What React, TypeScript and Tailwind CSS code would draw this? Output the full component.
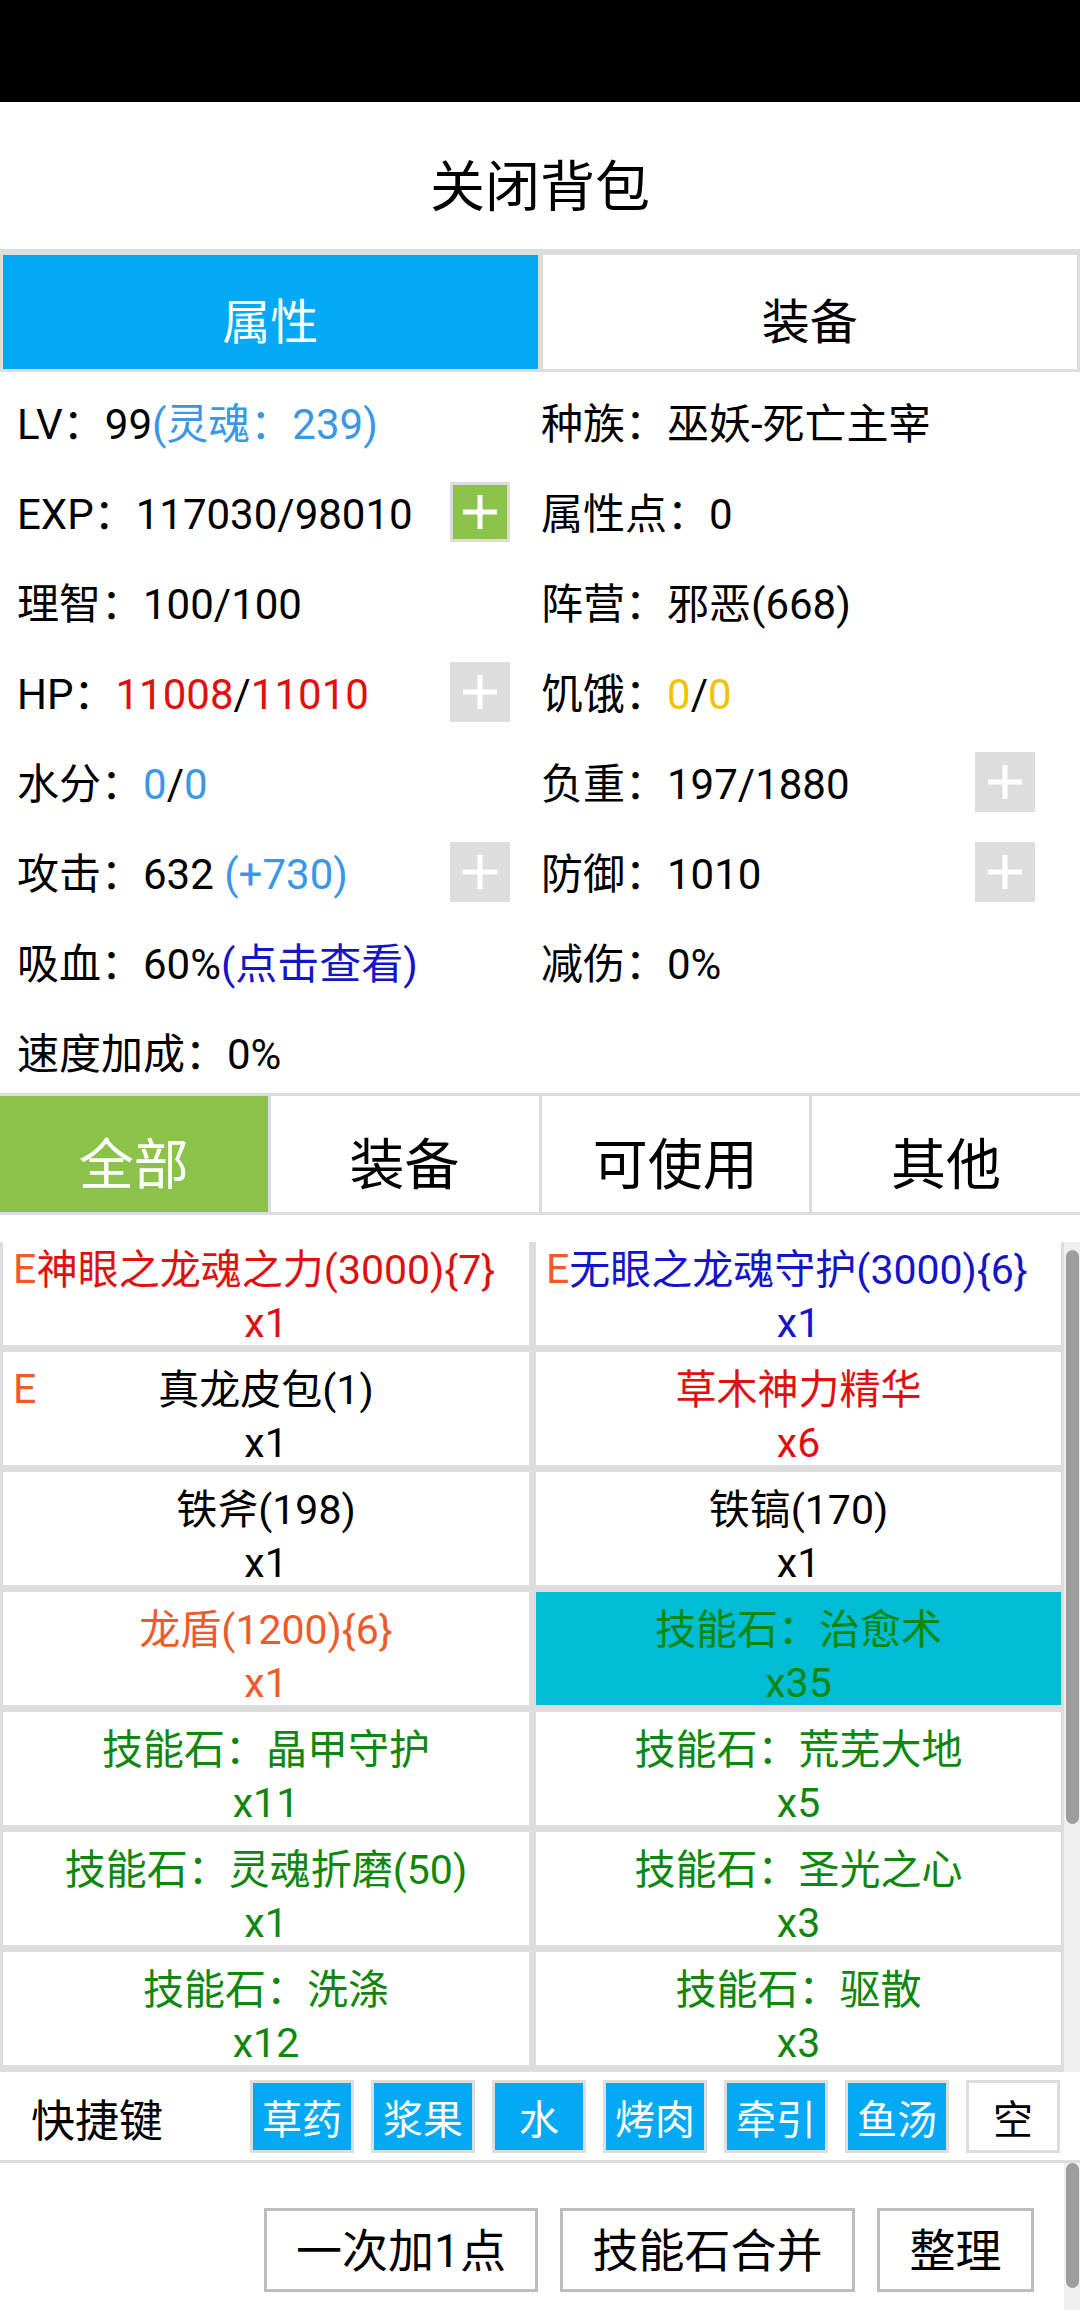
import React from "react";

const RED = "text-[#e01010]";
const LBLUE = "text-[#3a96e6]";
const DBLUE = "text-[#1414c8]";
const YEL = "text-[#f2c200]";
const GREEN = "text-[#0f870f]";
const ORANGE = "text-[#ef5a2a]";

function Plus({ green }: { green?: boolean }) {
  return (
    <div
      className={
        green
          ? "w-[60px] h-[60px] border-[3px] border-[#dcdcdc] bg-[#8bc34a] flex items-center justify-center"
          : "w-[60px] h-[60px] bg-[#dddddd] flex items-center justify-center"
      }
    >
      <svg width="36" height="36" viewBox="0 0 36 36">
        <rect x="15.5" y="1" width="5" height="34" fill="#ffffff" />
        <rect x="1" y="15.5" width="34" height="5" fill="#ffffff" />
      </svg>
    </div>
  );
}

function Row({
  left,
  right,
  lp,
  rp,
}: {
  left: React.ReactNode;
  right?: React.ReactNode;
  lp?: "green" | "gray";
  rp?: boolean;
}) {
  return (
    <div className="h-[90px] flex items-center">
      <div className="w-[541px] flex items-center">
        <div className="flex-1 pl-[17px] pt-[4px] whitespace-nowrap">{left}</div>
        <div className="w-[60px] h-[60px] mr-[31px]">
          {lp ? <Plus green={lp === "green"} /> : null}
        </div>
      </div>
      <div className="flex-1 flex items-center">
        <div className="flex-1 pt-[4px] whitespace-nowrap">{right}</div>
        <div className="w-[60px] h-[60px] mr-[45px]">{rp ? <Plus /> : null}</div>
      </div>
    </div>
  );
}

type Item = {
  name: string;
  count: string;
  color: string;
  e?: boolean;
  bg?: string;
};

const items: Item[] = [
  { name: "神眼之龙魂之力(3000){7}", count: "x1", color: RED, e: true },
  { name: "无眼之龙魂守护(3000){6}", count: "x1", color: DBLUE, e: true },
  { name: "真龙皮包(1)", count: "x1", color: "text-black", e: true },
  { name: "草木神力精华", count: "x6", color: RED },
  { name: "铁斧(198)", count: "x1", color: "text-black" },
  { name: "铁镐(170)", count: "x1", color: "text-black" },
  { name: "龙盾(1200){6}", count: "x1", color: ORANGE },
  { name: "技能石：治愈术", count: "x35", color: GREEN, bg: "bg-[#00bcd4]" },
  { name: "技能石：晶甲守护", count: "x11", color: GREEN },
  { name: "技能石：荒芜大地", count: "x5", color: GREEN },
  { name: "技能石：灵魂折磨(50)", count: "x1", color: GREEN },
  { name: "技能石：圣光之心", count: "x3", color: GREEN },
  { name: "技能石：洗涤", count: "x12", color: GREEN },
  { name: "技能石：驱散", count: "x3", color: GREEN },
];

const quick = [
  { t: "草药", w: "w-[104px]" },
  { t: "浆果", w: "w-[104px]" },
  { t: "水", w: "w-[94px]" },
  { t: "烤肉", w: "w-[104px]" },
  { t: "牵引", w: "w-[104px]" },
  { t: "鱼汤", w: "w-[104px]" },
];

export default function App() {
  return (
    <div className="w-[1080px] h-[2310px] bg-white overflow-hidden text-black font-[Roboto,'Noto_Sans_CJK_SC',sans-serif]">
      <div className="h-[102px] bg-black" />
      <div className="h-[147px] flex items-center justify-center pt-[24px] text-[55px]">关闭背包</div>
      <div className="h-[123px] bg-[#dddddd] flex gap-[5px] pt-[6px] pb-[3px] px-[3px]">
        <div className="flex-1 bg-[#03a9f4] text-white flex items-center justify-center pt-[22px] text-[48px]">属性</div>
        <div className="flex-1 bg-white flex items-center justify-center pt-[22px] text-[48px]">装备</div>
      </div>

      <div className="h-[721px] pt-[5px] overflow-hidden text-[42px]">
        <Row
          left={
            <>
              LV：99<span className={LBLUE}>(灵魂：239)</span>
            </>
          }
          right={<>种族：巫妖-死亡主宰</>}
        />
        <Row left={<>EXP：117030/98010</>} lp="green" right={<>属性点：0</>} />
        <Row left={<>理智：100/100</>} right={<>阵营：邪恶(668)</>} />
        <Row
          left={
            <>
              HP：<span className={RED}>11008</span>/<span className={RED}>11010</span>
            </>
          }
          lp="gray"
          right={
            <>
              饥饿：<span className={YEL}>0</span>/<span className={YEL}>0</span>
            </>
          }
        />
        <Row
          left={
            <>
              水分：<span className={LBLUE}>0</span>/<span className={LBLUE}>0</span>
            </>
          }
          right={<>负重：197/1880</>}
          rp
        />
        <Row
          left={
            <>
              攻击：632 <span className={LBLUE}>(+730)</span>
            </>
          }
          lp="gray"
          right={<>防御：1010</>}
          rp
        />
        <Row
          left={
            <>
              吸血：60%<span className={DBLUE}>(点击查看)</span>
            </>
          }
          right={<>减伤：0%</>}
        />
        <Row left={<>速度加成：0%</>} />
      </div>

      <div className="h-[122px] bg-[#dddddd] py-[3px] grid grid-cols-4 gap-[3px] text-[55px]">
        <div className="bg-[#8bc34a] text-white flex items-center justify-center pt-[22px]">全部</div>
        <div className="bg-white flex items-center justify-center pt-[22px]">装备</div>
        <div className="bg-white flex items-center justify-center pt-[22px]">可使用</div>
        <div className="bg-white flex items-center justify-center pt-[22px]">其他</div>
      </div>

      <div className="h-[27px]" />

      <div className="h-[830px] flex overflow-hidden">
        <div className="w-[1064px] bg-[#dddddd] overflow-hidden">
          <div className="-mt-[10px] grid grid-cols-[526px_525px] gap-[7px] px-[3px] pb-[7px]">
            {items.map((it, i) => (
              <div
                key={i}
                className={`relative h-[113px] ${it.bg ?? "bg-white"} flex flex-col items-center pt-[12px] text-[41px] leading-[53px] ${it.color}`}
              >
                {it.e ? (
                  <span className={`absolute left-[10px] top-[7px] leading-normal text-[41px] ${ORANGE}`}>E</span>
                ) : null}
                <div className="whitespace-nowrap">{it.name}</div>
                <div>{it.count}</div>
              </div>
            ))}
          </div>
        </div>
        <div className="w-[16px] bg-[#efefef] pt-[8px]">
          <div className="h-[574px] ml-[2px] w-[13px] rounded-full bg-[#9e9e9e]" />
        </div>
      </div>

      <div className="h-[91px] border-b-[3px] border-[#dddddd] flex items-center">
        <div className="w-[250px] pl-[31px] pt-[12px] text-[44px]">快捷键</div>
        <div className="flex gap-[17px]">
          {quick.map((q) => (
            <div
              key={q.t}
              className={`${q.w} h-[73px] border-[3px] border-[#dddddd] bg-[#03a9f4] text-white text-[40px] flex items-center justify-center pt-[10px]`}
            >
              {q.t}
            </div>
          ))}
          <div className="w-[94px] h-[73px] border-[3px] border-[#dddddd] bg-white text-[40px] flex items-center justify-center pt-[10px]">
            空
          </div>
        </div>
      </div>

      <div className="h-[147px] flex">
        <div className="flex-1 flex justify-end items-start pt-[45px] pr-[30px] gap-[22px] text-[46px]">
          <div className="w-[274px] h-[84px] border-[3px] border-[#bdbdbd] flex items-center justify-center pt-[2px]">一次加1点</div>
          <div className="w-[295px] h-[84px] border-[3px] border-[#bdbdbd] flex items-center justify-center pt-[2px]">技能石合并</div>
          <div className="w-[157px] h-[84px] border-[3px] border-[#bdbdbd] flex items-center justify-center pt-[2px]">整理</div>
        </div>
        <div className="w-[16px] bg-[#efefef]">
          <div className="h-[125px] ml-[2px] w-[13px] rounded-full bg-[#9e9e9e]" />
        </div>
      </div>
    </div>
  );
}
